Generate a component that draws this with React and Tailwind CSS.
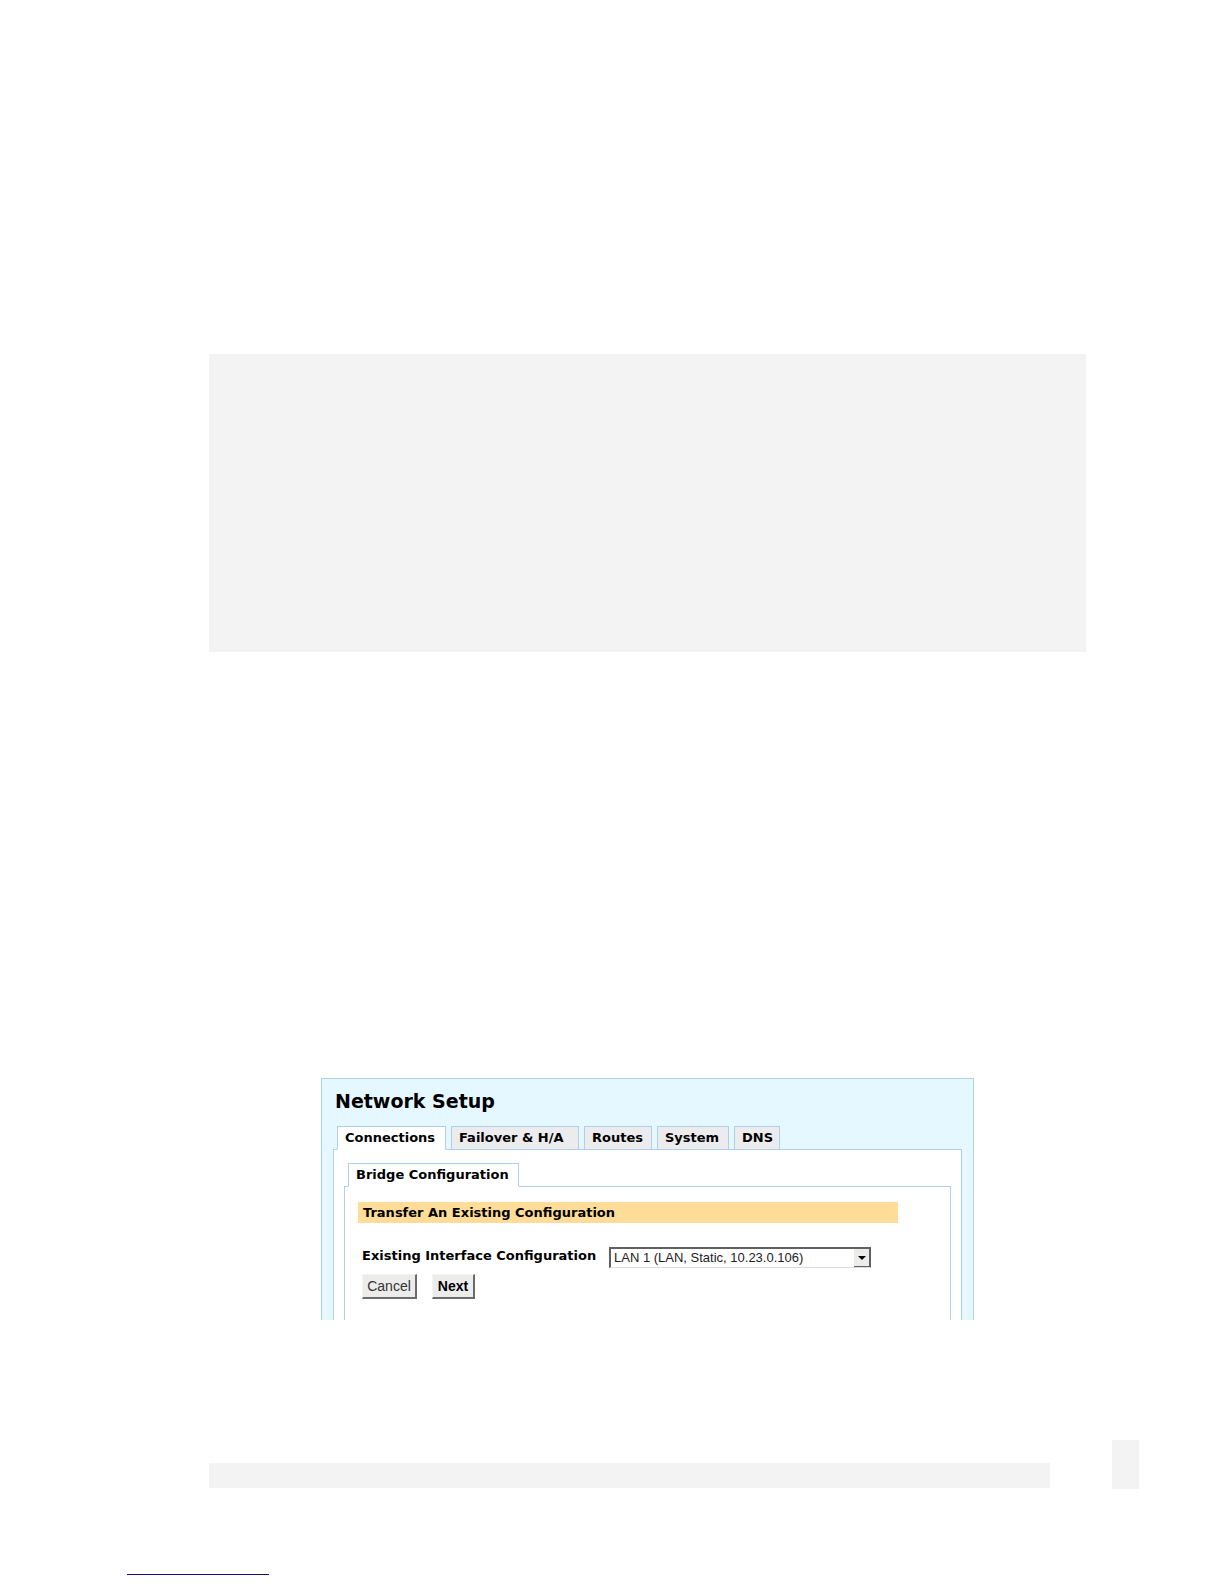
import { useState } from 'react';

const tabs = [
  { label: 'Connections', width: 'w-[109px]' },
  { label: 'Failover & H/A', width: 'w-[128px]' },
  { label: 'Routes', width: 'w-[68px]' },
  { label: 'System', width: 'w-[72px]' },
  { label: 'DNS', width: 'w-[46px]' },
];

const interfaces = [{ id: 'lan1', label: 'LAN 1 (LAN, Static, 10.23.0.106)' }];

function Tab({ label, width, active, onClick }) {
  return (
    <button
      type="button"
      role="tab"
      aria-selected={active}
      onClick={onClick}
      className={`relative z-10 h-6 border border-[#b0cfe8] pl-[7px] text-left text-[13px] leading-[22px] font-bold whitespace-nowrap ${width} ${
        active ? 'border-b-white bg-white' : 'bg-[#ececee]'
      }`}
    >
      {label}
    </button>
  );
}

function BridgeForm() {
  const [selected, setSelected] = useState('lan1');

  return (
    <form className="pt-[15px] pr-[52px] pb-[21px] pl-[13px]" onSubmit={(e) => e.preventDefault()}>
      <h2 className="bg-[#ffdc97] px-[5px] text-[13px] leading-[21px] font-bold">
        Transfer An Existing Configuration
      </h2>

      <div className="mt-6 flex items-start gap-[5px] pl-1">
        <label
          htmlFor="interface"
          className="w-[242px] text-[13px] leading-[18px] font-bold whitespace-nowrap"
        >
          Existing Interface Configuration
        </label>
        <div className="relative w-[262px]">
          <select
            id="interface"
            value={selected}
            onChange={(e) => setSelected(e.target.value)}
            className="block h-[21px] w-full appearance-none border-t-2 border-r border-b border-l-2 border-t-[#606060] border-r-[#606060] border-b-[#dcdcdc] border-l-[#606060] bg-white pl-[3px] font-['Liberation_Sans',Arial,sans-serif] text-[13px] leading-[18px] text-[#222222]"
          >
            {interfaces.map((item) => (
              <option key={item.id} value={item.id}>
                {item.label}
              </option>
            ))}
          </select>
          <span className="pointer-events-none absolute top-0.5 right-0 flex h-[18px] w-[17px] items-center justify-center border-r-2 border-b border-[#606060] bg-[#ececea]">
            <svg width="8" height="4" viewBox="0 0 8 4" aria-hidden="true">
              <path d="M0 0h8L4 4z" fill="#000" />
            </svg>
          </span>
        </div>
      </div>

      <div className="mt-1.5 flex gap-[15px] pl-1 font-['Liberation_Sans',Arial,sans-serif] text-[14px] leading-[22px]">
        <button
          type="button"
          className="h-[25px] w-[55px] border-t border-r-2 border-b-2 border-l border-t-[#f4f4f2] border-r-[#6c6c6c] border-b-[#6c6c6c] border-l-[#f4f4f2] bg-[#ececea] text-[#333333]"
        >
          Cancel
        </button>
        <button
          type="submit"
          className="h-[25px] w-[43px] border-t border-r-2 border-b-2 border-l border-t-[#f4f4f2] border-r-[#6c6c6c] border-b-[#6c6c6c] border-l-[#f4f4f2] bg-[#ececea] font-bold"
        >
          Next
        </button>
      </div>
    </form>
  );
}

function NetworkSetup() {
  const [activeTab, setActiveTab] = useState('Connections');

  return (
    <section className="mx-28 border border-b-0 border-[#b0cfe8] bg-[#e6f8ff] px-[11px] pt-[11px] font-['DejaVu_Sans',Verdana,sans-serif] text-black">
      <h1 className="px-0.5 text-[19px] leading-[22px] font-bold">Network Setup</h1>

      <div role="tablist" className="mt-3.5 flex gap-[5px] px-1">
        {tabs.map((tab) => (
          <Tab
            key={tab.label}
            label={tab.label}
            width={tab.width}
            active={tab.label === activeTab}
            onClick={() => setActiveTab(tab.label)}
          />
        ))}
      </div>

      <div className="-mt-px border border-b-0 border-[#b0cfe8] bg-white px-2.5 pt-[13px]">
        <div role="tablist" className="flex px-1">
          <Tab label="Bridge Configuration" width="w-[171px]" active />
        </div>
        <div className="-mt-px border border-b-0 border-[#b0cfe8]">
          <BridgeForm />
        </div>
      </div>
    </section>
  );
}

function App() {
  return (
    <div className="bg-white">
      <main className="pt-[354px] pr-[138px] pl-[209px]">
        {/* Shaded note area */}
        <div className="mb-[426px] h-[298px] bg-[#f3f3f3]" />
        <NetworkSetup />
      </main>

      {/* Page footer */}
      <footer className="pt-[120px]">
        <div className="flex items-end pr-[85px] pl-[209px]">
          <div className="mb-px h-[25px] flex-1 bg-[#f3f3f3]" />
          <div className="ml-[62px] h-[49px] w-[27px] bg-[#f3f3f3]" />
        </div>
        <div className="mt-[85px] mb-2 ml-[127px] h-px w-[142px] bg-[#10107c]" />
      </footer>
    </div>
  );
}

export default App;
